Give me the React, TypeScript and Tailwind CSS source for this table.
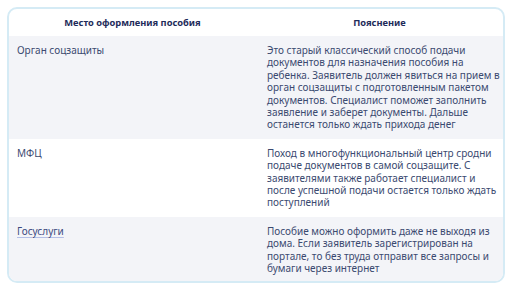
const rows = [
  {
    place: "Орган соцзащиты",
    note: [
      "Это старый классический способ подачи",
      "документов для назначения пособия на",
      "ребенка. Заявитель должен явиться на прием в",
      "орган соцзащиты с подготовленным пакетом",
      "документов. Специалист поможет заполнить",
      "заявление и заберет документы. Дальше",
      "останется только ждать прихода денег",
    ],
  },
  {
    place: "МФЦ",
    note: [
      "Поход в многофункциональный центр сродни",
      "подаче документов в самой соцзащите. С",
      "заявителями также работает специалист и",
      "после успешной подачи остается только ждать",
      "поступлений",
    ],
  },
  {
    place: "Госуслуги",
    link: true,
    note: [
      "Пособие можно оформить даже не выходя из",
      "дома. Если заявитель зарегистрирован на",
      "портале, то без труда отправит все запросы и",
      "бумаги через интернет",
    ],
  },
];

export default function App() {
  return (
    <div className="w-[516px] h-[290px] bg-white pt-[7px] pl-[7px] font-['Noto_Sans',sans-serif]">
      <div className="w-[498px] rounded-[10px] border-2 border-[#d5ebf5] overflow-hidden">
        {/* Header */}
        <div className="grid grid-cols-2 h-[27px] items-center text-[9.3px] font-bold text-[#1e2b5a]">
          <div className="text-center">Место оформления пособия</div>
          <div className="text-center">Пояснение</div>
        </div>

        {/* Rows */}
        {rows.map((r, i) => (
          <div
            key={i}
            className={`grid grid-cols-2 pt-[8px] ${
              i === rows.length - 1 ? "pb-[6px]" : "pb-[8px]"
            } ${i % 2 === 0 ? "bg-[#f3f4f8]" : "bg-white"} text-[10px] leading-[12.4px] text-[#3b4a70]`}
          >
            <div className="pl-[8px] pr-[10px]">
              {r.link ? (
                <a className="underline decoration-[#b4bfe6] underline-offset-2 text-[#3b4a80]">
                  {r.place}
                </a>
              ) : (
                r.place
              )}
            </div>
            <div className="pl-[11px] whitespace-nowrap">
              {r.note.map((line, j) => (
                <span key={j} className="block">
                  {line}
                </span>
              ))}
            </div>
          </div>
        ))}
      </div>
    </div>
  );
}
